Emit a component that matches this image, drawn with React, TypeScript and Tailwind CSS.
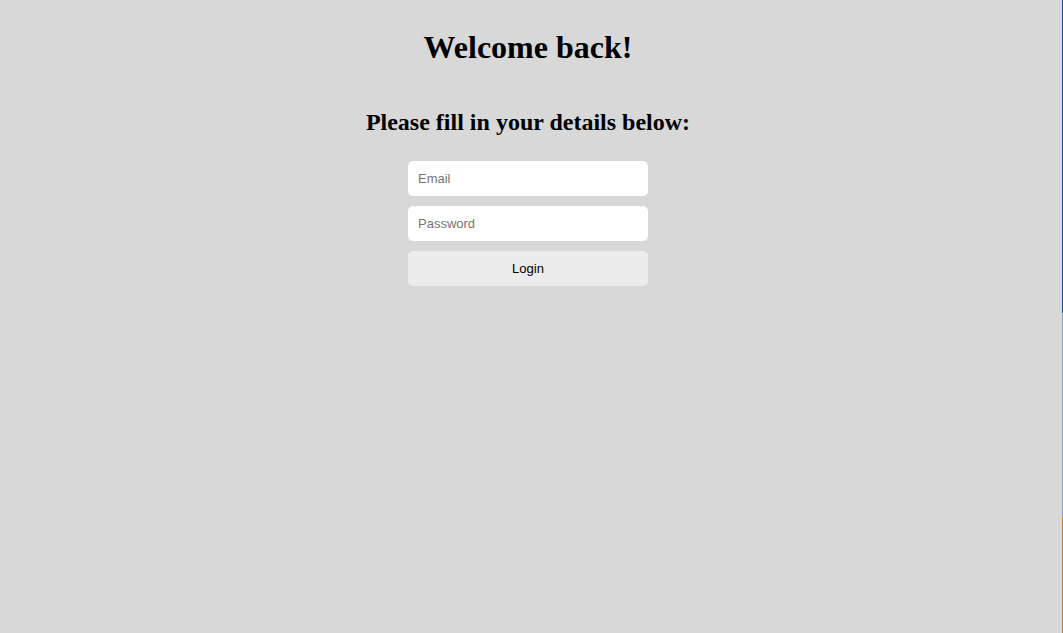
import React from "react";

export default function App() {
  return (
    <div className="relative min-h-[633px] w-full bg-[#d8d8d8]">
      <div className="flex w-[1056px] flex-col items-center pt-[29px]">
        <h1 className="text-[32px] leading-[37px] font-bold text-black [font-family:'Liberation_Serif',serif]">
          Welcome back!
        </h1>
        <h2 className="mt-[42px] text-[24px] leading-[28px] font-bold text-black [font-family:'Liberation_Serif',serif]">
          Please fill in your details below:
        </h2>
        <form
          className="mt-[25px] flex w-[240px] flex-col gap-[10px] [font-family:'Liberation_Sans',Arial,sans-serif]"
          onSubmit={(e) => e.preventDefault()}
        >
          <input
            type="email"
            placeholder="Email"
            className="h-[35px] w-full rounded-[5px] bg-white px-[10px] text-[13px] text-black outline-none placeholder:text-[#757575]"
          />
          <input
            type="password"
            placeholder="Password"
            className="h-[35px] w-full rounded-[5px] bg-white px-[10px] text-[13px] text-black outline-none placeholder:text-[#757575]"
          />
          <button
            type="submit"
            className="h-[35px] w-full rounded-[5px] bg-[#ececec] text-[13px] text-black"
          >
            Login
          </button>
        </form>
      </div>
      <div className="absolute top-0 right-0 flex h-[633px] w-[1px] flex-col">
        <div className="h-[313px] bg-[#0d5a8c]" />
        <div className="h-[204px] bg-[#8fa2b9]" />
        <div className="flex-1 bg-[#c57a2e]" />
      </div>
    </div>
  );
}
